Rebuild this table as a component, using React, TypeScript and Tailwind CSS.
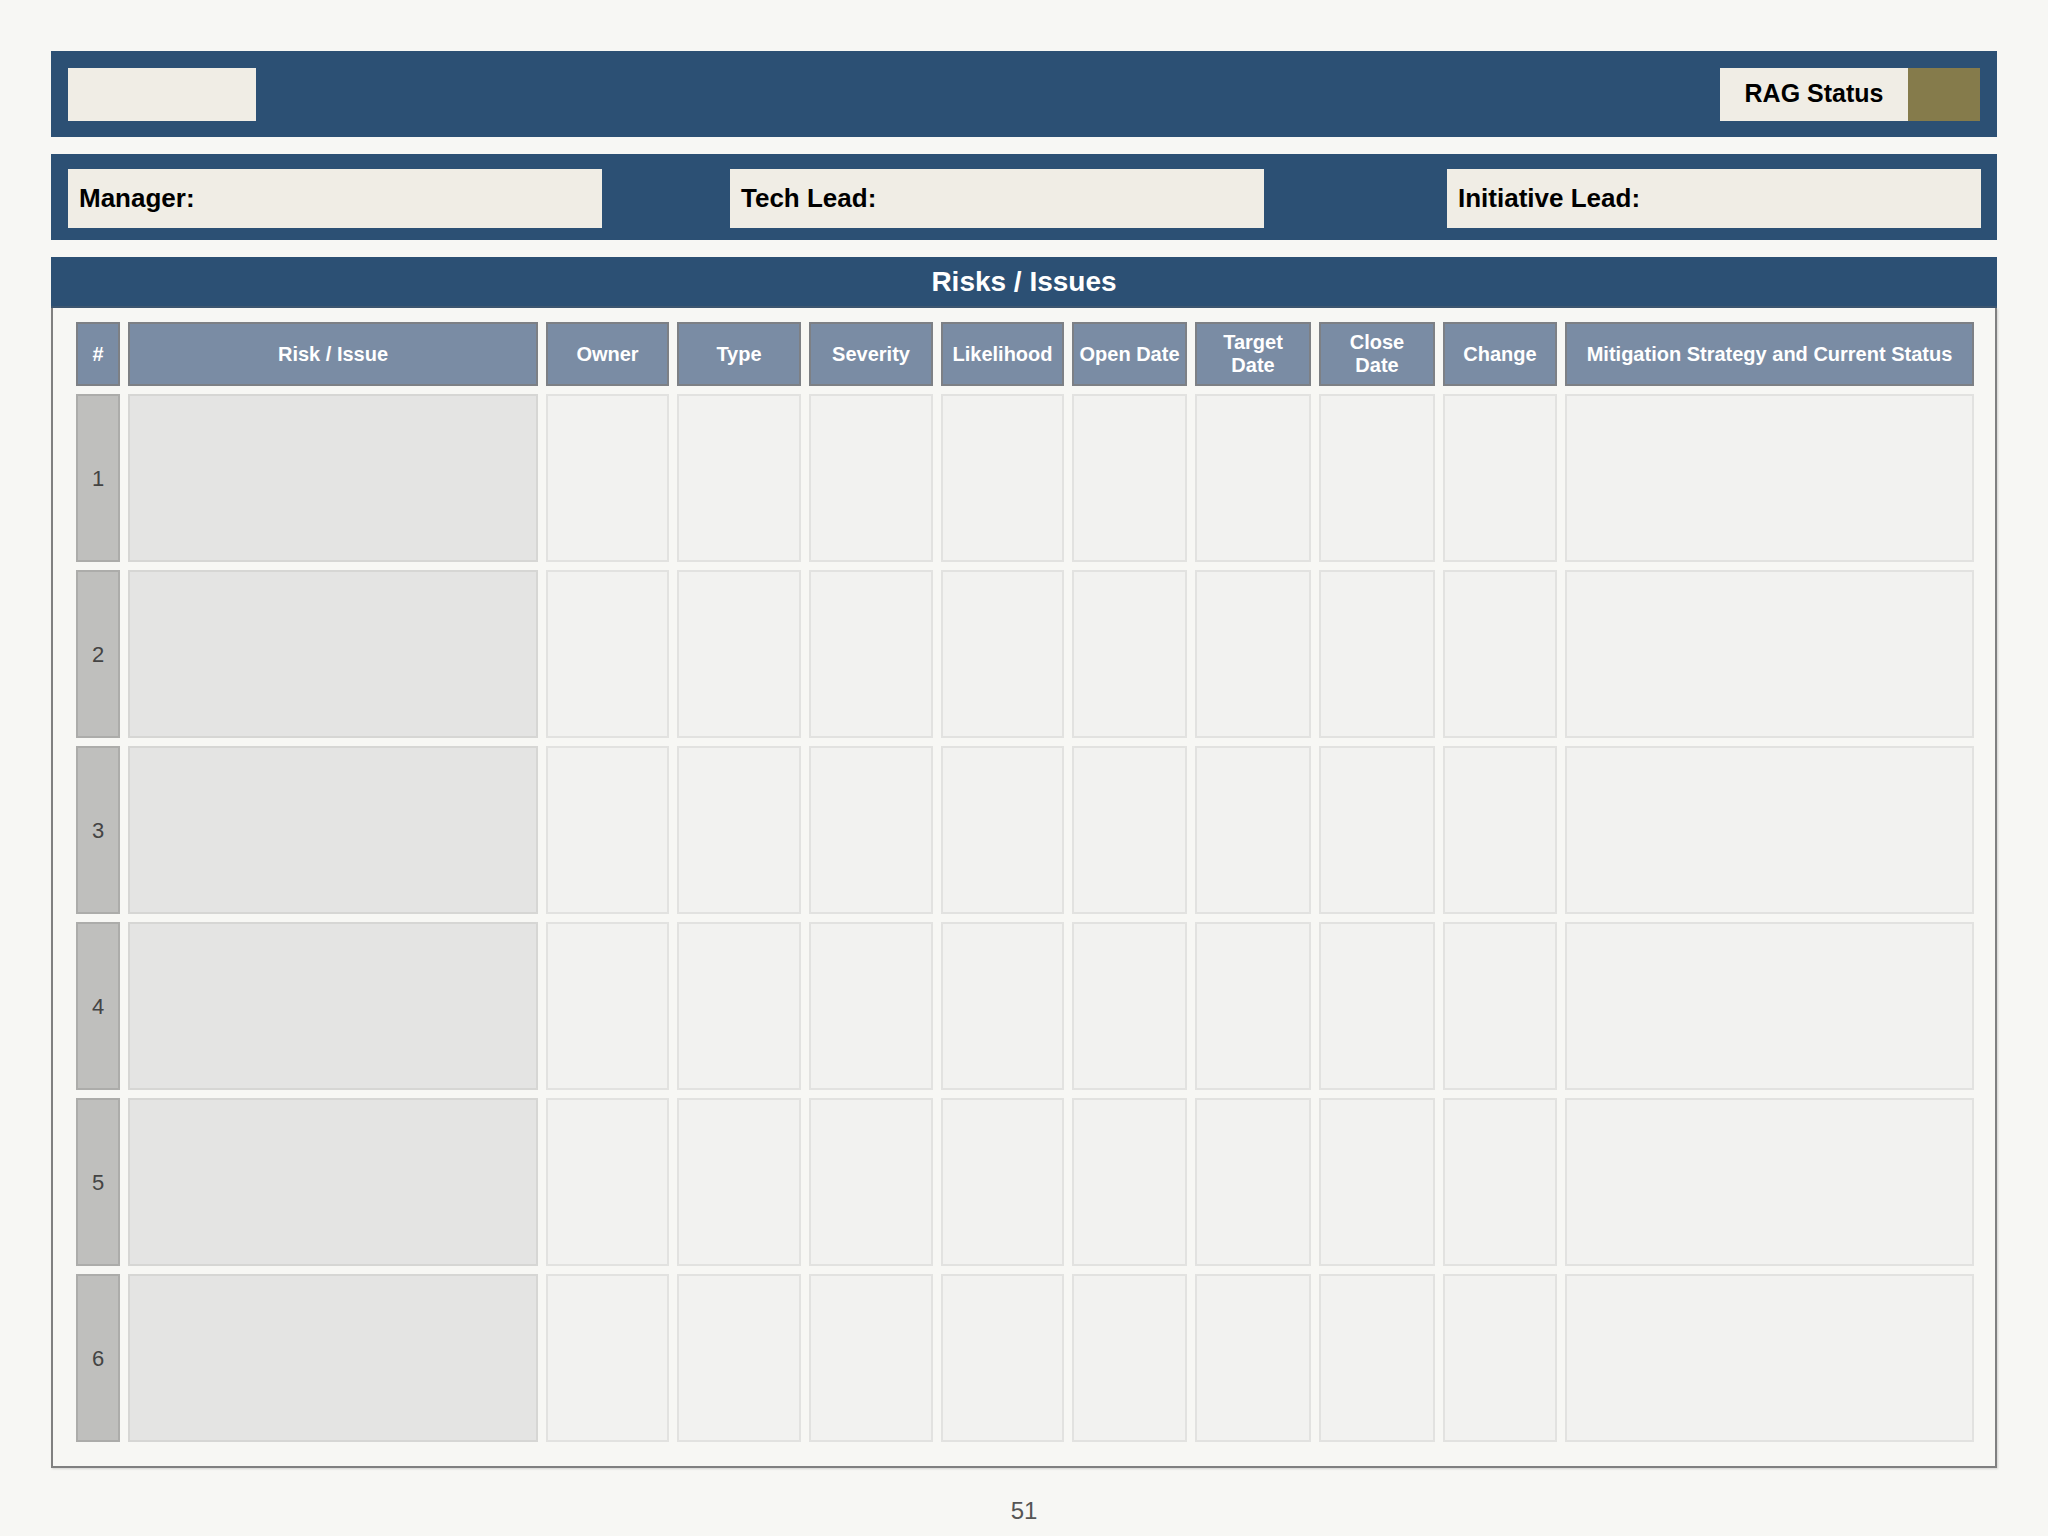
const columns = [
  "#",
  "Risk / Issue",
  "Owner",
  "Type",
  "Severity",
  "Likelihood",
  "Open Date",
  "Target Date",
  "Close Date",
  "Change",
  "Mitigation Strategy and Current Status",
];

const wrapped: Record<string, string[]> = {
  "Target Date": ["Target", "Date"],
  "Close Date": ["Close", "Date"],
};

const rows = [1, 2, 3, 4, 5, 6];

function HeaderCell({ label }: { label: string }) {
  const lines = wrapped[label];
  return (
    <div className="flex h-[64px] flex-col items-center justify-center border-2 border-[#7d8085] bg-[#7a8ca4] text-center text-[20px] font-bold leading-[23px] text-white">
      {lines ? lines.map((l) => <span key={l}>{l}</span>) : label}
    </div>
  );
}

function InfoBox({ label, className }: { label: string; className: string }) {
  return (
    <div className={`flex h-[59px] w-[534px] items-center bg-[#f0ede5] pl-[11px] text-[26px] font-bold text-black ${className}`}>
      {label}
    </div>
  );
}

export default function App() {
  return (
    <div className="min-h-[1536px] bg-[#f7f7f4] px-[51px] pt-[51px] font-['Liberation_Sans',Arial,sans-serif]">
      {/* title bar */}
      <div className="flex h-[86px] items-center justify-between bg-[#2c5074] px-[17px]">
        <div className="h-[53px] w-[188px] bg-[#f0ede5]" />
        <div className="flex h-[53px]">
          <div className="flex w-[188px] items-center justify-center bg-[#f0ede5] text-[25px] font-bold text-black">
            RAG Status
          </div>
          <div className="w-[72px] bg-[#857b4b]" />
        </div>
      </div>

      {/* people bar */}
      <div className="mt-[17px] flex h-[86px] bg-[#2c5074] pl-[17px] pt-[15px]">
        <InfoBox label="Manager:" className="w-[533px]" />
        <InfoBox label="Tech Lead:" className="ml-[128px]" />
        <InfoBox label="Initiative Lead:" className="ml-[183px]" />
      </div>

      {/* risks panel */}
      <div className="mt-[17px] flex h-[51px] items-center justify-center border-b-2 border-[#3d5670] bg-[#2c5074] text-[28px] font-bold text-white">
        Risks / Issues
      </div>
      <div className="border-2 border-t-0 border-[#808080] pb-[24px] pl-[23px] pr-[21px] pt-[14px] shadow-[1px_1px_2px_rgba(0,0,0,0.15)]">
        <div className="grid grid-cols-[44px_410px_123px_124px_124px_123px_115px_116px_116px_114px_1fr] gap-x-[8px] gap-y-[8px]">
          {columns.map((c) => (
            <HeaderCell key={c} label={c} />
          ))}
          {rows.map((n) => (
            <>
              <div
                key={`n${n}`}
                className="flex h-[168px] items-center justify-center border-2 border-[#acacaa] bg-[#bfbfbd] text-[22px] text-[#444444]"
              >
                {n}
              </div>
              <div key={`r${n}`} className="border-2 border-[#d6d6d4] bg-[#e4e4e3]" />
              {columns.slice(2).map((c) => (
                <div key={`${c}${n}`} className="border-2 border-[#e2e2e0] bg-[#f2f2f0]" />
              ))}
            </>
          ))}
        </div>
      </div>

      <div className="pt-[29px] text-center text-[24px] leading-[28px] text-[#555555]">51</div>
    </div>
  );
}
